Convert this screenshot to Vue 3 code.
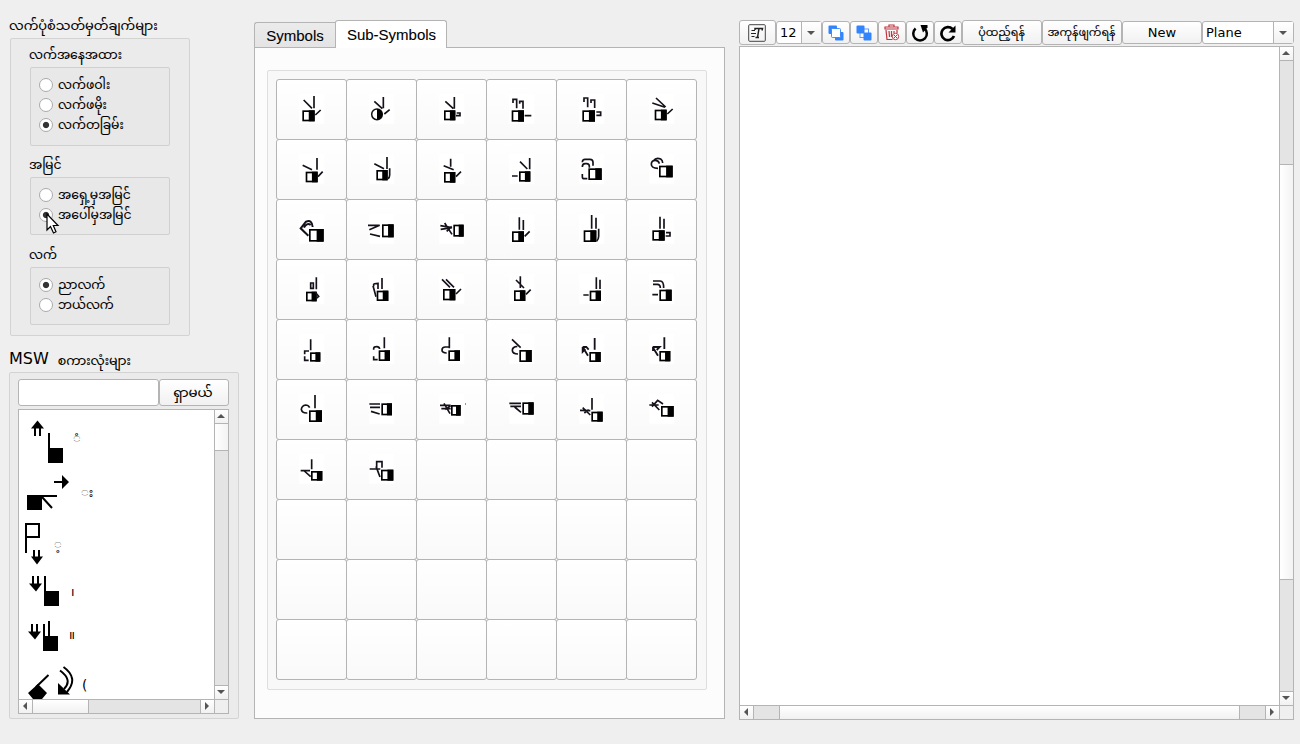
<script setup>
const groups = [
  { title: 'လက်အနေအထား', cls: 'g-position', options: [['လက်ဖဝါး', false], ['လက်ဖမိုး', false], ['လက်တခြမ်း', true]] },
  { title: 'အမြင်', cls: 'g-view', options: [['အရှေ့မှအမြင်', false], ['အပေါ်မှအမြင်', true]] },
  { title: 'လက်', cls: 'g-hand', options: [['ညာလက်', true], ['ဘယ်လက်', false]] },
]

// Palette glyphs: palm box [x, y, w, h] and finger strokes, in thirds of a pixel.
const glyphs = [
  { b: [79, 94, 37, 33], d: 'M83 63L108 88M114 51V88M118 108L134 93' },
  { c: [93, 106, 16], d: 'M85 67L109 89M112 54V88M115 105L131 92' },
  { b: [84, 94, 34, 30], d: 'M88 67L112 89M115 54V89M122 102H132V110H120' },
  { b: [77, 94, 37, 34], d: 'M81 72V61H92V88M101 74V67H111V89M116 110H136' },
  { b: [79, 94, 38, 34], d: 'M84 69V57H95V85M105 72V63H116V87M121 99H134V109H121' },
  { b: [86, 92, 36, 32], d: 'M90 57L119 84M79 72L117 85M124 105L140 90' },
  { b: [89, 98, 36, 32], d: 'M80 79L108 92M123 57V92M126 113L140 98' },
  { b: [91, 93, 34, 31], d: 'M85 74L114 89M123 54V90M131 88V108Q131 116 126 119' },
  { b: [84, 99, 34, 32], d: 'M83 80L113 92M104 59V83M120 113L135 98' },
  { b: [99, 97, 34, 31], d: 'M102 68L124 90M131 57V91M78 111H95' },
  { b: [97, 88, 40, 35], d: 'M79 70Q79 61 87 61H102Q111 61 111 70V80M79 84Q79 74 87 74H92Q100 74 100 82V86M79 105V113Q79 119 85 119H94' },
  { b: [99, 80, 41, 35], d: 'M96 88Q76 88 76 76Q76 64 88 64Q98 64 100 74M82 66Q90 54 104 60Q110 64 110 72' },
  { b: [99, 90, 44, 38], d: 'M97 110L74 88L90 68Q108 60 110 84M84 86Q92 70 104 78', w: 6 },
  { b: [108, 76, 35, 39], d: 'M66 79H101L70 92M72 105L102 112' },
  { b: [112, 77, 31, 36], d: 'M73 80L108 86L74 91M86 72L108 106M107 82L92 97' },
  { b: [78, 97, 36, 32], d: 'M100 55V92M112 63V93M116 112L131 97' },
  { b: [83, 94, 38, 35], d: 'M107 48V89M120 56V89M128 89V112Q128 121 122 126' },
  { b: [79, 94, 37, 31], d: 'M102 53V89M114 59V89M120 101H132V111H119' },
  { b: [90, 98, 32, 29], d: 'M121 55V91M104 72H112V88H104ZM118 100L128 112L120 119' },
  { b: [92, 95, 35, 31], d: 'M108 57V90M81 80L90 113M83 82V76Q84 73 96 73V90' },
  { b: [81, 90, 37, 34], d: 'M78 61L102 85M90 61L114 85M120 105L135 90' },
  { b: [84, 94, 34, 32], d: 'M103 52V87M90 63L114 87M120 106L134 92' },
  { b: [101, 95, 34, 31], d: 'M121 55V90M132 62V90M82 108H98' },
  { b: [100, 92, 37, 34], d: 'M81 66H103Q113 66 113 87M81 76H94Q103 76 103 87M79 107H96' },
  { b: [102, 100, 31, 28], d: 'M104 61V94M86 106V96H99M86 112V124H98' },
  { b: [98, 94, 34, 32], d: 'M115 55V88M83 92V88Q84 83 92 83Q100 83 101 90M83 112V122H95' },
  { b: [97, 94, 35, 32], d: 'M100 55V88M99 84H88Q78 84 78 93Q78 102 92 102' },
  { b: [100, 93, 37, 36], d: 'M78 61L104 86M94 82Q79 83 79 94Q79 105 96 105' },
  { b: [100, 99, 34, 30], d: 'M116 57V92M80 84L96 110M80 84H91L98 92M80 84V98L88 90', w: 5.5 },
  { b: [100, 96, 33, 31], d: 'M115 55V90M80 84L96 110M80 84H101L92 93M81 84V96', w: 5.5 },
  { b: [99, 94, 39, 35], d: 'M117 48V88M101 86Q97 78 89 78Q77 80 76 91Q78 103 94 102' },
  { b: [106, 73, 32, 36], d: 'M70 75H102M72 85H102M75 97L101 105' },
  { b: [105, 78, 29, 32], d: 'M72 79H104M76 89H104M84 73L102 104M104 80L88 92', dot: true },
  { b: [109, 70, 34, 37], d: 'M70 73H105M73 82H105M86 84L105 100' },
  { b: [106, 98, 34, 30], d: 'M108 57V92M72 94L103 95M80 86L103 108M85 102L98 92' },
  { b: [105, 81, 38, 32], d: 'M70 78H98M78 70L100 93M78 83L95 64L111 75' },
  { b: [105, 96, 34, 29], d: 'M107 61V91M74 95H102M85 96L104 113' },
  { b: [105, 92, 37, 33], d: 'M71 90H103M92 86V68H108V86M90 82L102 114' },
]
const cells = Array.from({ length: 60 }, (_, i) => glyphs[i] || null)
</script>

<template>
  <main class="window">
    <section class="left">
      <h2 class="title t1">လက်ပုံစံသတ်မှတ်ချက်များ</h2>
      <div class="frame options">
        <div v-for="g in groups" :key="g.title" class="group" :class="g.cls">
          <h3>{{ g.title }}</h3>
          <div class="inner">
            <label v-for="o in g.options" :key="o[0]"><i class="radio" :class="{ on: o[1] }"></i><span>{{ o[0] }}</span></label>
          </div>
        </div>
      </div>
      <h2 class="title t2"><span class="latin">MSW</span><span class="word">စကားလုံးများ</span></h2>
      <div class="frame dictionary">
        <div class="search"><div class="input"></div><button>ရှာမယ်</button></div>
        <div class="list">
          <div class="row">
            <svg class="signs" width="195" height="289" viewBox="19 410 195 289">
              <g fill="#000">
                <path d="M37.500 420.500L44 428.500H41V436H39V428.500H36V436H34V428.500H31ZM48 433H50V448H63V463H48Z" />
                <path d="M54 481H62V475L69 482L62 489V483H54ZM27 495H57V497H42V510H27Z" />
                <path d="M33 550H35V556.500H38V550H40V556.500H43L37 564.500L31 556.500H33Z" />
                <path d="M32 576H34V583.500H37V576H39V583.500H42L36 591.500L29 583.500H32ZM44 576H46V591H59V606H44Z" />
                <path d="M31 624H33V631.500H36V624H38V631.500H41L35 639.500L28 631.500H31ZM43 624H45V636H48V621H50V636H58V651H43Z" />
                <path d="M28 693L38 684L47 693L42 699H33ZM58 683L70 694.500H58Z" />
              </g>
              <path d="M26 553V524H39V537H26M42 497L52 508M36 687L48.500 675M60 670.500Q73 680 64 689M63.500 667Q79 678 67 692" fill="none" stroke="#000" stroke-width="2" />
              <g class="meaning">
                <text x="73" y="443">◌ံ</text><text x="81" y="497">◌း</text><text x="54" y="549">◌့</text>
                <text x="71" y="596">၊</text><text x="69" y="639">။</text><text class="paren" x="82" y="690">(</text>
              </g>
            </svg>
            <div class="vbar"><b class="arr u"></b><i class="thumb"></i><b class="arr d"></b></div>
          </div>
          <div class="hbar"><b class="arr l"></b><i class="thumb"></i><i class="gap"></i><b class="arr r"></b><em></em></div>
        </div>
      </div>
    </section>

    <section class="middle">
      <nav><div class="tab">Symbols</div><div class="tab active">Sub-Symbols</div></nav>
      <div class="pane">
        <div class="palette">
          <div class="cells">
            <div v-for="(g, i) in cells" :key="i" class="cell">
              <svg v-if="g" width="70" height="60" viewBox="0 0 210 180">
                <rect x="70" y="46" width="75" height="88" fill="#fff" />
                <template v-if="g.b">
                  <rect :x="g.b[0] + 2.5" :y="g.b[1] + 2.5" :width="g.b[2] - 5" :height="g.b[3] - 5" fill="#fff" stroke="#000" stroke-width="5" />
                  <rect :x="g.b[0] + g.b[2] * 0.52" :y="g.b[1]" :width="g.b[2] * 0.48" :height="g.b[3]" />
                </template>
                <template v-else>
                  <circle :cx="g.c[0]" :cy="g.c[1]" :r="g.c[2]" fill="#fff" stroke="#111" stroke-width="4.5" />
                  <path d="M93 90A16 16 0 0 1 93 122Z" />
                </template>
                <path :d="g.d" fill="none" stroke="#15101a" :stroke-width="g.w || 5" />
                <rect v-if="g.dot" x="147" y="73" width="3" height="4" fill="#55d" />
              </svg>
            </div>
          </div>
        </div>
      </div>
    </section>

    <section class="right">
      <div class="toolbar">
        <button class="w36 tall">
          <svg width="18" height="18" viewBox="0 0 18 18" fill="none" stroke="#222"><rect x=".7" y=".7" width="16.600" height="16.600" rx="1" stroke="#444" /><path d="M7 6V4.500H14.500L14 6.500M11 4.500L9.500 13.500M7.500 13.500H11" stroke-width="1.500" /><path d="M3.500 6.500H7M3 9.500H8M3.500 12.500H6.500" /></svg>
        </button>
        <div class="combo num"><span>12</span><b class="arr d"></b></div>
        <button class="w28"><svg width="16" height="16" viewBox="0 0 16 16"><rect x=".5" y=".5" width="8.500" height="8.500" rx="1" fill="#3284fb" /><rect x="7" y="7" width="8.500" height="8.500" rx="1" fill="#3284fb" /><rect x="3.500" y="3.500" width="9" height="9" rx="1" fill="#fff" stroke="#3284fb" stroke-width=".9" /></svg></button>
        <button class="w28"><svg width="16" height="16" viewBox="0 0 16 16"><rect x="4" y="4" width="8.500" height="8.500" fill="#fff" stroke="#5a9cfb" stroke-width="1" /><rect x=".5" y=".5" width="8" height="8" rx="1" fill="#3284fb" /><rect x="7.500" y="7.500" width="8" height="8" rx="1" fill="#3284fb" /></svg></button>
        <button class="w28"><svg width="16" height="17" viewBox="0 0 16 17" fill="none" stroke="#bd3540"><path d="M1 5V3H14V5ZM5 3V1H10V3M2 6L3 15.500H8.500M13 6V9M5 7L5.500 13M7.500 7V13M10 7V9" stroke-width="1.200" /><circle cx="11.500" cy="12.500" r="3.200" fill="#fff" /><path d="M10 11L13 14M13 11L10 14" /></svg></button>
        <button class="w28"><svg width="18" height="18" viewBox="0 0 18 18"><path d="M4.600 4.500A6.800 6.800 0 1 0 13.500 4.500" fill="none" stroke="#000" stroke-width="2.500" /><path d="M9.500 1H16.500V3.500L12 8.500Z" /></svg></button>
        <button class="w28"><svg width="18" height="18" viewBox="0 0 18 18"><path d="M13.500 5A6.500 6.500 0 1 0 15 12" fill="none" stroke="#000" stroke-width="2.700" /><path d="M16.500 1.500V8.500H9.500Z" /></svg></button>
        <button class="w80 tall my">ပုံထည့်ရန်</button>
        <button class="w80 tall my">အကုန်ဖျက်ရန်</button>
        <button class="w80">New</button>
        <div class="combo plane"><span>Plane</span><b class="arr d"></b></div>
      </div>
      <div class="canvas">
        <div class="row"><div class="paper"></div><div class="vbar"><b class="arr u"></b><i class="gap"></i><i class="thumb"></i><b class="arr d"></b></div></div>
        <div class="hbar"><b class="arr l"></b><i class="gap"></i><i class="thumb"></i><i class="gap2"></i><b class="arr r"></b><em></em></div>
      </div>
    </section>

    <svg class="cursor" width="14" height="22" viewBox="0 0 14 22"><path d="M1 1V17L4.500 13.500L7.500 20L10 18.800L7.300 12.500H12Z" fill="#fff" stroke="#000" stroke-width="1.200" /></svg>
  </main>
</template>

<style>
body { background: #efefef; }
</style>

<style scoped>
* { box-sizing: border-box; margin: 0; padding: 0; }
.window { position: relative; width: 1300px; height: 744px; overflow: hidden; display: flex; background: #efefef; color: #000; font: 12.4px "Noto Sans Myanmar", Padauk, "DejaVu Sans", sans-serif; }
button { border: 1px solid #b4b4b4; border-radius: 3px; background: linear-gradient(#fff, #f1f1f1); color: #000; font: inherit; display: flex; align-items: center; justify-content: center; white-space: nowrap; }
.left { width: 254px; padding: 14px 0 0 9px; -webkit-text-stroke: 0.1px #000; }
.title { font-size: 13px; font-weight: 400; height: 24px; line-height: 27px; white-space: nowrap; }
.latin { font: 16px "DejaVu Sans", sans-serif; -webkit-text-stroke: 0; }
.t2 { margin-top: 12px; height: 25px; font-size: 12.6px; display: flex; align-items: flex-start; gap: 9px; }
.t2 .latin { line-height: 22px; }
.t2 .word { line-height: 28px; }
.frame { border: 1px solid #d3d3d3; border-radius: 2px; background: #ebebeb; }
.options { width: 180px; height: 298px; margin-left: 1px; padding: 6px 19px; }
.group h3 { font-size: 12.4px; font-weight: 400; height: 22px; line-height: 24px; white-space: nowrap; margin-left: -1px; }
.inner { border: 1px solid #d0d0d0; border-radius: 2px; background: #e8e8e8; width: 140px; padding: 7px 0 0 8px; }
.g-position .inner { height: 79px; }
.g-view { margin-top: 9px; }
.g-view .inner, .g-hand .inner { height: 58px; }
.g-hand { margin-top: 10px; }
.inner label { display: flex; align-items: center; gap: 5px; height: 20px; white-space: nowrap; line-height: 20px; }
.inner label span { padding-top: 3px; }
.radio { width: 14px; height: 14px; flex: none; border: 1px solid #aaa; border-radius: 50%; background: #fff; }
.radio.on { background: radial-gradient(circle, #333 2.700px, #fff 3.600px); }
.dictionary { width: 230px; height: 347px; margin-top: -1px; padding: 6px 8px; }
.search { display: flex; height: 27px; }
.input { width: 141px; border: 1px solid #b4b4b4; border-radius: 3px; background: #fff; }
.search button { width: 70px; font-size: 13.4px; padding-right: 2px; padding-top: 2px; }
.list { width: 211px; height: 305px; margin-top: 3px; border: 1px solid #b4b4b4; background: #fff; }
.row { display: flex; }
.signs { display: block; }
.meaning { font-size: 13px; }
.paren { font: 13.5px "DejaVu Sans", sans-serif; }
.vbar { border-left: 1px solid #b4b4b4; background: #e4e4e4; display: flex; flex-direction: column; width: 14px; flex: none; }
.list .vbar .thumb { height: 27px; margin-bottom: auto; }
.thumb { border: 0 solid #b4b4b4; background: linear-gradient(90deg, #fff, #f3f3f3); }
.vbar .thumb { border-width: 0 0 1px; }
.arr { display: grid; place-items: center; flex: none; background: linear-gradient(#fff, #f1f1f1); }
.vbar .arr { height: 14px; }
.arr.u { border-bottom: 1px solid #b4b4b4; }
.vbar .arr.d { border-top: 1px solid #b4b4b4; }
.arr::before { content: ""; border: 4px solid transparent; margin: 0 2px 2px 0; }
.combo .arr::before { margin: 0 2px 0 0; }
.arr.u::before { border-top: 0; border-bottom-color: #555; }
.arr.d::before { border-bottom: 0; border-top-color: #555; }
.arr.l::before { border-left: 0; border-right-color: #555; }
.arr.r::before { border-right: 0; border-left-color: #555; }
.hbar { height: 14px; display: flex; border-top: 1px solid #b4b4b4; background: #e4e4e4; }
.hbar .arr { width: 14px; }
.hbar .arr.l { border-right: 1px solid #b4b4b4; }
.hbar .arr.r { border-left: 1px solid #b4b4b4; }
.hbar .thumb { border-width: 0 1px 0 0; background: linear-gradient(#fff, #f1f1f1); }
.hbar em { width: 14px; flex: none; border-left: 1px solid #b4b4b4; background: #efefef; }
.list .hbar .thumb { width: 56px; }
.list .gap { flex: 1; }
.middle { width: 471px; padding-top: 20px; font: 15px "Liberation Sans", sans-serif; -webkit-text-stroke: 0.1px #000; }
nav { display: flex; align-items: flex-end; height: 28px; margin-bottom: -1px; }
.tab { width: 82px; height: 26px; border: 1px solid #b4b4b4; border-right: 0; border-radius: 3px 0 0; background: linear-gradient(#ebebeb, #e4e4e4); text-align: center; line-height: 26px; padding-right: 1px; }
.tab.active { width: 112px; height: 28px; margin-left: -1px; border-right: 1px solid #b4b4b4; border-bottom: 0; border-radius: 3px 3px 0 0; background: #fff; line-height: 28px; z-index: 1; padding: 0 0 0 1px; }
.pane { height: 672px; border: 1px solid #b4b4b4; background: #fcfcfc; padding: 22px 12px; }
.palette { width: 440px; height: 620px; border: 1px solid #dedede; background: #f8f8f8; padding: 8px; border-radius: 2px; }
.cells { display: grid; grid-template-columns: repeat(6, 70px); grid-auto-rows: 60px; }
.cell { width: 71px; height: 61px; border: 1px solid #b4b4b4; border-radius: 3px; background: linear-gradient(#fff, #f9f9f9); }
.cell svg { display: block; margin: -1px; }
.right { width: 555px; margin-left: 14px; padding-top: 20px; font-family: "DejaVu Sans", sans-serif; font-size: 13px; }
.toolbar { display: flex; align-items: center; height: 25px; margin-bottom: 1px; }
.toolbar button { height: 23px; flex: none; }
.toolbar .tall { height: 25px; }
.toolbar .w36 { width: 37px; padding-right: 1px; }
.w28 { width: 28px; }
.w80 { width: 80px; }
.toolbar .my { font: 11.2px "Noto Sans Myanmar", Padauk, sans-serif; -webkit-text-stroke: 0.1px #000; padding: 2px 1px 0 0; }
.combo { display: flex; height: 23px; border: 1px solid #b4b4b4; border-radius: 3px; background: #fff; line-height: 21px; flex: none; }
.combo span { flex: 1; padding-left: 3px; }
.combo .arr { width: 20px; border-left: 1px solid #b4b4b4; }
.num { width: 46px; }
.plane { width: 92px; }
.canvas { height: 674px; border: 1px solid #b4b4b4; background: #fff; }
.paper { flex: 1; height: 658px; }
.canvas .vbar .gap { height: 104px; border-bottom: 1px solid #b4b4b4; }
.canvas .vbar .thumb { height: 415px; margin-bottom: auto; }
.canvas .hbar .gap { width: 26px; border-right: 1px solid #b4b4b4; }
.canvas .hbar .thumb { flex: 1; }
.canvas .gap2 { width: 25px; }
.cursor { position: absolute; left: 46px; top: 213px; }
</style>
